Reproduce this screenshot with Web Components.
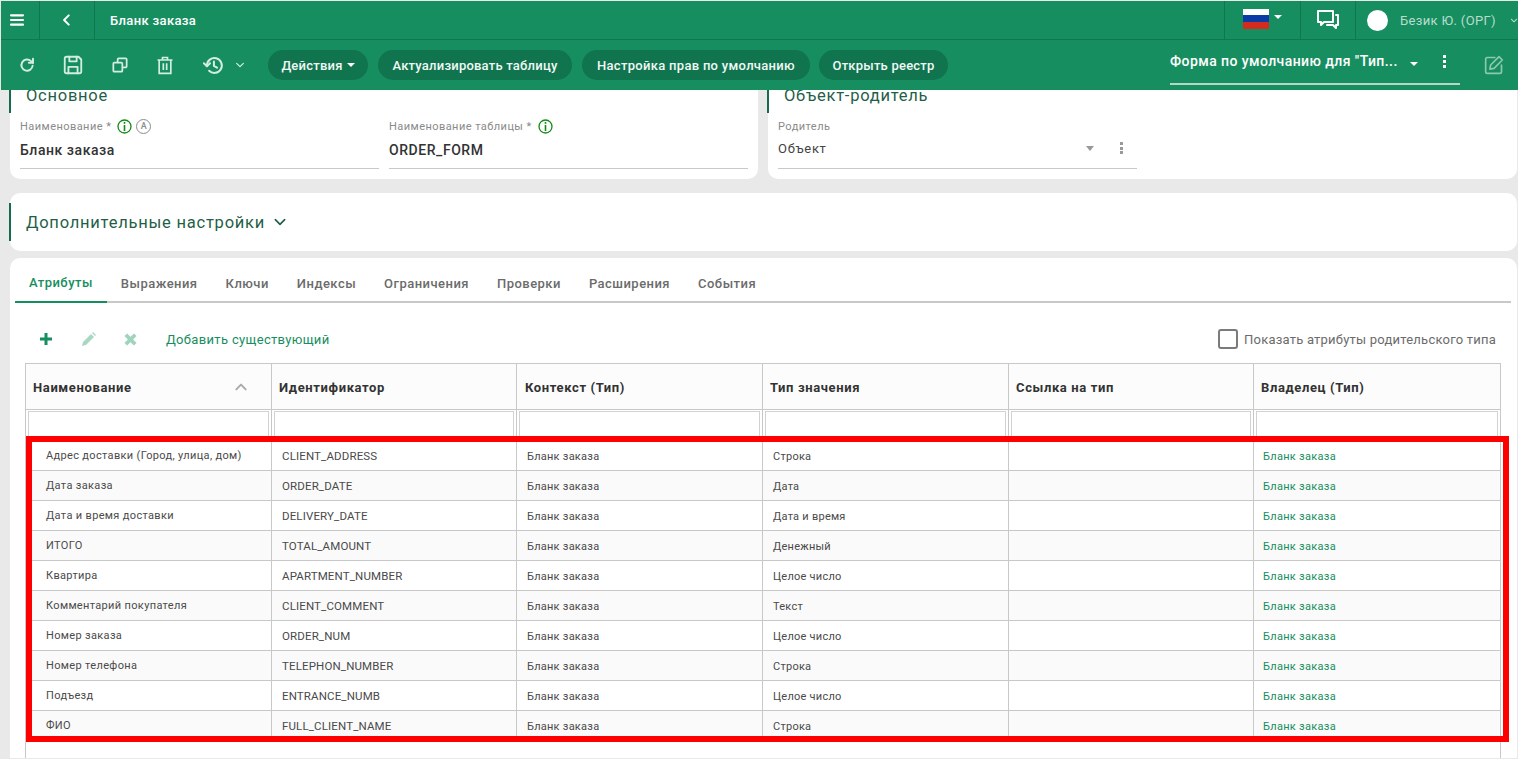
<!DOCTYPE html>
<html lang="ru"><head><meta charset="utf-8"><title>Бланк заказа</title>
<style>
html,body{margin:0;height:100%;overflow:hidden;background:#e9e9e9;font-family:Roboto,"Liberation Sans",sans-serif;}
</style></head><body>
<app-shell>
  <top-bar></top-bar>
  <action-bar></action-bar>
  <form-cards></form-cards>
  <settings-card></settings-card>
  <attr-panel></attr-panel>
  <mark-box></mark-box>
</app-shell>
<script>
const def=(n,html)=>customElements.define(n,class extends HTMLElement{
  constructor(){super();this.attachShadow({mode:'open'}).innerHTML=typeof html==='function'?html(this):html;}
});
const S=(w,h,b,x='')=>`<svg ${x} width="${w}" height="${h}" viewBox="0 0 24 24" fill="none" stroke="currentColor" stroke-width="2" stroke-linecap="round" stroke-linejoin="round">${b}</svg>`;

def('app-shell',`<style>:host{display:flex;flex-direction:column;position:relative;height:759px;width:1518px;box-sizing:border-box;padding:1px 0 1px 1px;overflow:hidden;background:#e9e9e9}</style><slot></slot>`);

def('top-bar',`<style>
:host{display:flex;align-items:stretch;height:39px;box-sizing:border-box;background:#178e60;border-bottom:1px solid #0f7650;color:#fff;font:500 13px Roboto,sans-serif;letter-spacing:.35px;flex:none;position:relative;z-index:3}
.c{display:flex;align-items:center;border-right:1px solid #0f7650;box-sizing:border-box}
.menu{width:39px;justify-content:flex-start;padding-left:8px}
.back{width:55px;justify-content:center}
.t{flex:1;padding-left:15px;border:0}
.fl{width:77px;border-left:1px solid #0f7650;padding-left:18px;gap:5px}
.ch{width:55px;justify-content:center}
.u{width:162px;border:0;padding-left:11px;gap:12px;font-weight:400;color:#b9dccc;font-size:13px;white-space:nowrap;overflow:hidden}
.dot{width:21px;height:21px;border-radius:50%;background:#fff;flex:none}
.flag{width:26px;height:20px;display:flex;flex-direction:column;margin-top:-3px}
.flag i{flex:1}
.car{width:0;height:0;border:4px solid transparent;border-top:4px solid #fff;border-bottom:0;margin-top:-6px}
</style>
<div class="c menu">${S(16,16,'<path d="M3 5h18M3 12h18M3 19h18"/>','stroke-width="3.2"')}</div>
<div class="c back">${S(14,14,'<path d="M15 4l-8 8 8 8"/>','stroke-width="3.4"')}</div>
<div class="c t"><span>Бланк заказа</span></div>
<div class="c fl"><div class="flag"><i style="background:#fff"></i><i style="background:#0a3ca5"></i><i style="background:#d52b1e"></i></div><div class="car"></div></div>
<div class="c ch"><svg width="24" height="22" viewBox="0 0 24 22" fill="none" stroke="#fff" stroke-width="2" stroke-linejoin="round"><path d="M2 2h15v11H8l-3 3v-3H2z"/><path d="M20 6h2v10h-2v3l-3-3h-6" stroke-linecap="round"/></svg></div>
<div class="c u"><div class="dot"></div><span>Безик Ю. (ОРГ)</span>${S(11,11,'<path d="M4 8l8 8 8-8"/>','stroke-width="3" style="color:#b9dccc;margin-left:2px"')}</div>`);

def('pill-btn',`<style>:host{display:inline-flex;align-items:center;justify-content:center;box-sizing:border-box;height:30px;border-radius:15px;background:#10744f;color:#f2f8f5;font:500 13px Roboto,sans-serif;letter-spacing:.22px;white-space:nowrap;gap:4px}</style><slot></slot>`);

def('action-bar',`<style>
:host{display:flex;align-items:center;height:50px;background:#178e60;flex:none;position:relative;z-index:3;color:#d3ede2}
.ic{display:flex;flex:none}
.b{display:flex;gap:10px}
.car{display:inline-block;width:0;height:0;border:4px solid transparent;border-top:4px solid #fff;border-bottom:0}
.sel{margin-left:auto;width:290px;height:45px;padding-bottom:1px;margin-top:-5px;border-bottom:2px solid #b7d6c9;box-sizing:border-box;display:flex;align-items:center;color:#fff;font:500 14px Roboto,sans-serif;letter-spacing:.42px;white-space:nowrap}
.sel span{width:235px}
.sel .car{margin:6px 0 0 5px;border-width:4.500px;border-bottom:0}
.k{margin-left:25px;width:3px;display:flex;flex-direction:column;gap:2px}.k i{height:3px;background:#fff}
.ed{margin:0 14px 0 24px;color:#8dc8ae;display:flex}
</style>
<span class="ic" style="margin-left:17px">${S(18,18,'<path d="M19.500 13a7.500 7.500 0 1 1-2.400-6.500L20 9"/><path d="M20 3.500V9h-5.500"/>','stroke-width="2.600"')}</span>
<span class="ic" style="margin-left:26px">${S(22,22,'<path d="M3 5a2 2 0 0 1 2-2h13l3 3v13a2 2 0 0 1-2 2H5a2 2 0 0 1-2-2z"/><path d="M8 3v5h8V3M7 21v-7h10v7"/>')}</span>
<span class="ic" style="margin-left:28px">${S(16,16,'<rect x="2" y="8.500" width="13.500" height="13.500" rx="1.500"/><path d="M8.500 8V3.500A1.500 1.500 0 0 1 10 2h10.500A1.500 1.500 0 0 1 22 3.500V14a1.500 1.500 0 0 1-1.500 1.500H16"/>','stroke-width="2.600"')}</span>
<span class="ic" style="margin-left:27px">${S(20,20,'<path d="M3 6h18M9 6V3h6v3M5 6v16h14V6M10 10v8M14 10v8"/>','stroke-linecap="butt" stroke-linejoin="miter"')}</span>
<span class="ic" style="margin-left:28px">${S(21,21,'<path d="M4.500 12a8.500 8.500 0 1 1 2.500 6"/><path d="M1 9.500l3.500 3.500 3.500-3.500M12.500 7.500v5l3.500 2"/>','stroke-width="2.300"')}</span>
<span class="ic" style="margin-left:11px">${S(10,10,'<path d="M4 8l8 8 8-8"/>','stroke-width="3"')}</span>
<div class="b" style="margin-left:23px"><pill-btn style="width:100px">Действия<span class="car"></span></pill-btn><pill-btn style="width:194px">Актуализировать таблицу</pill-btn><pill-btn style="width:228px;letter-spacing:.3px">Настройка прав по умолчанию</pill-btn><pill-btn style="width:129px;margin-left:-1px">Открыть реестр</pill-btn></div>
<div class="sel"><span>Форма по умолчанию для "Тип...</span><i class="car"></i><div class="k"><i></i><i></i><i></i></div></div>
<span class="ed">${S(20,20,'<path d="M13 3H4a2 2 0 0 0-2 2v15a2 2 0 0 0 2 2h15a2 2 0 0 0 2-2v-8"/><path d="M18 2l4 4-10 10-5 1 1-5z"/>')}</span>`);

def('info-ic',`<style>:host{display:inline-flex}</style><svg width="15" height="15" viewBox="0 0 15 15"><circle cx="7.500" cy="7.500" r="6.500" fill="none" stroke="#128a14" stroke-width="1.300"/><rect x="6.700" y="3" width="1.600" height="1.800" fill="#128a14"/><rect x="6.700" y="6" width="1.600" height="6" fill="#128a14"/></svg>`);
def('auto-ic',`<style>:host{display:inline-flex}span{display:flex;align-items:center;justify-content:center;width:13px;height:13px;border:1px solid #8c8c8c;border-radius:50%;font:500 9px Roboto,sans-serif;color:#8c8c8c}</style><span>A</span>`);

def('form-field',t=>`<style>
:host{display:block;box-sizing:border-box;height:51px;border-bottom:1px solid #c9c9c9}
.l{display:flex;align-items:center;height:16px;font:400 11px Roboto,sans-serif;letter-spacing:.45px;color:#8a8a8a;white-space:nowrap}
.v{display:flex;align-items:center;height:30px;margin-top:1px}
.g{display:inline-flex;gap:4px;margin-left:6px}
</style><div class="l"><span>${t.getAttribute('label')}</span><span class="g"><slot name="ic"></slot></span></div><div class="v"><slot></slot></div>`);

def('form-card',t=>`<style>
:host{display:block;background:#fff;border-radius:0 0 10px 10px;box-sizing:border-box;height:117px;padding:17px 10px 0}
h3{margin:0 0 0 -11px;padding-left:15px;border-left:2px solid #176a4c;height:34px;box-sizing:border-box;font:400 16.500px/34px Roboto,sans-serif;letter-spacing:.75px;color:#1f5f48}
.r{display:flex;gap:10px;margin-top:5px}
</style><h3>${t.getAttribute('heading')}</h3><div class="r"><slot></slot></div>`);

def('form-cards',`<style>
:host{display:grid;grid-template-columns:748px 749px;gap:10px;margin:-28px 0 14px 9px;flex:none;position:relative;z-index:1}
form-field{width:359px}
b{font:500 14px Roboto,sans-serif;letter-spacing:.55px;color:#333}
.o{font:400 13px Roboto,sans-serif;letter-spacing:.7px;color:#444;flex:1}
.car{width:0;height:0;border:4.500px solid transparent;border-top:5px solid #999;border-bottom:0;margin-right:26px}
.k{width:3px;display:flex;flex-direction:column;gap:1.500px;margin-right:14px}.k i{height:3px;background:#999}
span.ff{display:flex;width:100%;align-items:center;margin-top:-4px}
</style>
<form-card heading="Основное">
 <form-field label="Наименование *"><info-ic slot="ic"></info-ic><auto-ic slot="ic"></auto-ic><b>Бланк заказа</b></form-field>
 <form-field label="Наименование таблицы *"><info-ic slot="ic"></info-ic><b>ORDER_FORM</b></form-field>
</form-card>
<form-card heading="Объект-родитель">
 <form-field label="Родитель"><span class="ff"><span class="o">Объект</span><i class="car"></i><span class="k"><i></i><i></i><i></i></span></span></form-field>
</form-card>`);

def('settings-card',`<style>
:host{display:flex;align-items:center;height:58px;background:#fff;border-radius:10px;margin:0 0 7px 9px;width:1507px;flex:none;box-sizing:border-box}
h3{margin:0 0 0 -1px;height:38px;display:flex;align-items:center;gap:8px;border-left:2px solid #176a4c;padding-left:15px;font:400 16.500px Roboto,sans-serif;letter-spacing:.77px;color:#1f5f48}
</style><h3>Дополнительные настройки ${S(14,14,'<path d="M4 8l8 8 8-8"/>','stroke-width="2.800"')}</h3>`);

def('tab-strip',`<style>
:host{display:flex;height:45px;margin:0 6px 0 5px;border-bottom:2px solid #c8c8c8;box-sizing:border-box;font:500 13px Roboto,sans-serif;letter-spacing:.47px;color:#6b6b6b;flex:none}
span{display:flex;align-items:center;padding:5px 14px 0;white-space:nowrap;margin-bottom:-2px}
.a{color:#178e60;border-bottom:2px solid #178e60}
</style><span class="a">Атрибуты</span><span>Выражения</span><span>Ключи</span><span>Индексы</span><span>Ограничения</span><span>Проверки</span><span>Расширения</span><span>События</span>`);

def('attr-toolbar',`<style>
:host{display:flex;align-items:center;height:34px;margin:19px 21px 7px 16px;color:#178e60;font:400 13px Roboto,sans-serif;letter-spacing:.33px;flex:none}
.ic{display:flex}
.ck{margin-left:auto;display:flex;align-items:center;gap:6px;color:#6b6b6b;letter-spacing:.22px}
.box{width:20px;height:20px;box-sizing:border-box;border:2px solid #7b7b7b;border-radius:3px}
</style>
<span class="ic" style="margin-left:13px"><svg width="14" height="14" viewBox="0 0 14 14"><path d="M5.500 1h3v4.500H13v3H8.500V13h-3V8.500H1v-3h4.500z" fill="#178e60"/></svg></span>
<span class="ic" style="margin-left:28px"><svg width="16" height="16" viewBox="0 0 16 16"><path d="M1 15l1-4 8-8 3 3-8 8zM11 2l1-1 3 3-1 1z" fill="#a8d8c2"/></svg></span>
<span class="ic" style="margin-left:25px"><svg width="17" height="17" viewBox="0 0 14 14"><path d="M2 4.200L4.200 2 7 4.800 9.800 2 12 4.200 9.200 7 12 9.800 9.800 12 7 9.200 4.200 12 2 9.800 4.800 7z" fill="#a0d4bd"/></svg></span>
<span style="margin-left:27px">Добавить существующий</span>
<div class="ck"><div class="box"></div><span>Показать атрибуты родительского типа</span></div>`);

const cols=['Наименование','Идентификатор','Контекст (Тип)','Тип значения','Ссылка на тип','Владелец (Тип)'];
const rows=[
['Адрес доставки (Город, улица, дом)','CLIENT_ADDRESS','Строка'],
['Дата заказа','ORDER_DATE','Дата'],
['Дата и время доставки','DELIVERY_DATE','Дата и время'],
['ИТОГО','TOTAL_AMOUNT','Денежный'],
['Квартира','APARTMENT_NUMBER','Целое число'],
['Комментарий покупателя','CLIENT_COMMENT','Текст'],
['Номер заказа','ORDER_NUM','Целое число'],
['Номер телефона','TELEPHON_NUMBER','Строка'],
['Подъезд','ENTRANCE_NUMB','Целое число'],
['ФИО','FULL_CLIENT_NAME','Строка']];
def('attr-table',`<style>
:host{display:block;margin:0 16px 0 15px;border:solid #c8c8c8;border-width:1px 1px 0;flex:1;background:#fff;overflow:hidden}
.g{display:grid;grid-template-columns:246px 245px 246px 246px 245px 1fr}
.h>div{height:46px;box-sizing:border-box;display:flex;align-items:center;justify-content:space-between;padding:1px 7px 0;background:#fcfcfc;border-right:1px solid #c8c8c8;border-bottom:1px solid #c8c8c8;font:700 13px Roboto,sans-serif;letter-spacing:.62px;color:#333}
.h>div:nth-child(3){padding-left:8px}
.f>div{height:31px;box-sizing:border-box;padding:1px 2px 0;border-right:1px solid #c8c8c8;border-bottom:1px solid #c8c8c8}
.f i{display:block;height:100%;border:1px solid #d2d2d2;box-sizing:border-box}
.h>div:last-child,.f>div:last-child,.r>div:last-child{border-right:0}
.r>div{height:30px;box-sizing:border-box;display:flex;align-items:center;padding:2px 10px 0;border-right:1px solid #c8c8c8;border-bottom:1px solid #c8c8c8;font:400 11px Roboto,sans-serif;letter-spacing:.25px;color:#4a4a4a;white-space:nowrap;background:#fff}
.r:nth-child(even)>div{background:#fafafa}
.r>div:first-child{padding:0 0 0 20px;letter-spacing:.34px}
.r>div.id{font-size:11.500px;letter-spacing:.14px;padding-top:0}
.r>div.l{color:#178e60;padding-left:9px;letter-spacing:.3px}
.sort{color:#aaa;margin-right:16px;display:flex}
</style>
<div class="g h">${cols.map((c,i)=>`<div><span>${c}</span>${i==0?`<span class="sort">${S(14,14,'<path d="M4 16l8-8 8 8"/>','stroke-width="3.400"')}</span>`:''}</div>`).join('')}</div>
<div class="g f">${cols.map(()=>`<div><i></i></div>`).join('')}</div>
<div>${rows.map(r=>`<div class="g r"><div>${r[0]}</div><div class="id">${r[1]}</div><div>Бланк заказа</div><div>${r[2]}</div><div></div><div class="l">Бланк заказа</div></div>`).join('')}</div>`);

def('attr-panel',`<style>
:host{display:flex;flex-direction:column;background:#fff;border-radius:10px 10px 0 0;margin-left:9px;width:1507px;flex:1;min-height:0;box-sizing:border-box;overflow:hidden}
</style><tab-strip></tab-strip><attr-toolbar></attr-toolbar><attr-table></attr-table>`);

def('mark-box',`<style>:host{position:absolute;left:26px;top:436px;width:1483px;height:306px;box-sizing:border-box;border:6px solid #f00;z-index:5;pointer-events:none}</style>`);
</script>
</body></html>
